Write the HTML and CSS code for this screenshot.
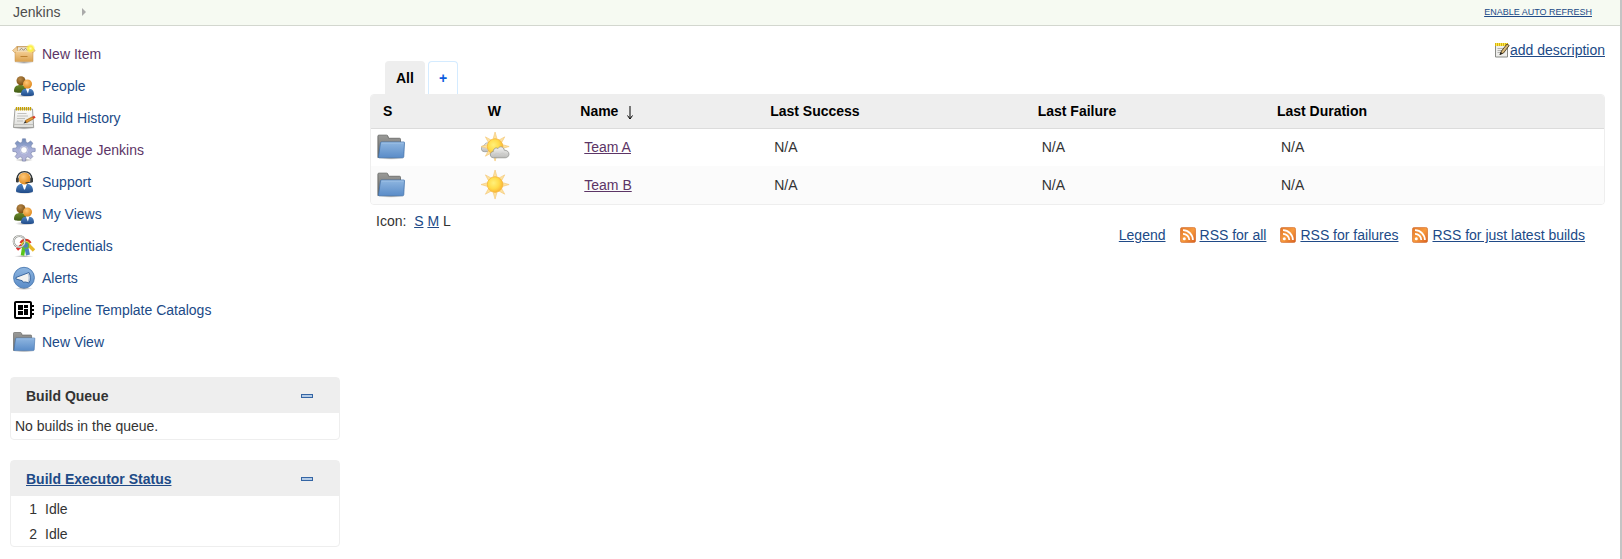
FILE: index.html
```html
<!DOCTYPE html>
<html lang="en">
<head>
    <meta charset="UTF-8">
    <meta name="viewport" content="width=device-width, initial-scale=1.0">
    <title>Dashboard [Jenkins]</title>
    <link rel="stylesheet" href="styles.css">
</head>
<body>
    <!-- Shared icons -->
    <svg class="sprite" aria-hidden="true">
        <defs>
            <linearGradient id="gBlue" x1="0" y1="0" x2="0" y2="1"><stop offset="0" stop-color="#8fb6e0"/><stop offset="1" stop-color="#5a8cc8"/></linearGradient>
            <linearGradient id="gGrey" x1="0" y1="0" x2="0" y2="1"><stop offset="0" stop-color="#9a9a98"/><stop offset="1" stop-color="#6a6b69"/></linearGradient>
            <linearGradient id="gCoat" x1="0" y1="0" x2="0" y2="1"><stop offset="0" stop-color="#4f86c6"/><stop offset="1" stop-color="#204a87"/></linearGradient>
            <linearGradient id="gGreen" x1="0" y1="0" x2="0" y2="1"><stop offset="0" stop-color="#6c8a2c"/><stop offset="1" stop-color="#3f5a14"/></linearGradient>
            <linearGradient id="gBox" x1="0" y1="0" x2="0" y2="1"><stop offset="0" stop-color="#f5cf96"/><stop offset="1" stop-color="#dba350"/></linearGradient>
            <linearGradient id="gPaper" x1="0" y1="0" x2="0" y2="1"><stop offset="0" stop-color="#ffffff"/><stop offset="1" stop-color="#dcdcd8"/></linearGradient>
            <linearGradient id="gGear" x1="0" y1="0" x2="0" y2="1"><stop offset="0" stop-color="#6c8ab8"/><stop offset="0.5" stop-color="#a9b0d8"/><stop offset="1" stop-color="#b5b5d6"/></linearGradient>
            <linearGradient id="gCloud" x1="0" y1="0" x2="0" y2="1"><stop offset="0" stop-color="#f4f4f3"/><stop offset="1" stop-color="#bcbcba"/></linearGradient>
            <linearGradient id="gRss" x1="0" y1="0" x2="1" y2="1"><stop offset="0" stop-color="#e0762a"/><stop offset="0.5" stop-color="#f79a3e"/><stop offset="1" stop-color="#d95f1e"/></linearGradient>
            <radialGradient id="gFace" cx="0.4" cy="0.35" r="0.65"><stop offset="0" stop-color="#ffc878"/><stop offset="1" stop-color="#e08a1e"/></radialGradient>
            <radialGradient id="gDark" cx="0.4" cy="0.35" r="0.65"><stop offset="0" stop-color="#b98a4a"/><stop offset="1" stop-color="#7c4f12"/></radialGradient>
            <radialGradient id="gGlow"><stop offset="0" stop-color="#fffbb0"/><stop offset="0.5" stop-color="#fcf03c"/><stop offset="1" stop-color="#fce94f" stop-opacity="0"/></radialGradient>
            <radialGradient id="gSun" cx="0.4" cy="0.4" r="0.6"><stop offset="0" stop-color="#fff07a"/><stop offset="0.6" stop-color="#ffdc4a"/><stop offset="1" stop-color="#fbb836"/></radialGradient>
            <radialGradient id="gShade"><stop offset="0" stop-color="#000" stop-opacity="0.35"/><stop offset="1" stop-color="#000" stop-opacity="0"/></radialGradient>
        </defs>

        <symbol id="icon-new-item" viewBox="0 0 24 24">
            <ellipse cx="12" cy="20.5" rx="10" ry="1.5" fill="url(#gShade)"/>
            <path d="M5 4.500h14l2 5H3z" fill="#c99a55" stroke="#b98236" stroke-width=".5"/>
            <path d="M6 5.200h12l1 3.800H5z" fill="#eee6d8"/>
            <path d="M7.500 8l2-1.500 2 1.500 2-1.500 2 1.500" fill="none" stroke="#8a7a60" stroke-width=".9"/>
            <path d="M3 9h18v10.500H3z" fill="url(#gBox)" stroke="#c08c44" stroke-width=".5"/>
            <path d="M5 4.500L.5 8.500l2 2L5.500 9zM19 4.500l4.200 4-2 2-2.700-1.500z" fill="#f3d09a" stroke="#c08c44" stroke-width=".5"/>
            <path d="M3.500 9.400h17" stroke="#fbe6c0" stroke-width=".8"/>
            <path d="M8.500 14.500h7" stroke="#bd8232" stroke-width="1"/>
            <circle cx="18.500" cy="6.500" r="4.800" fill="url(#gGlow)"/>
        </symbol>

        <symbol id="icon-people" viewBox="0 0 24 24">
            <ellipse cx="13" cy="21.500" rx="10" ry="2" fill="url(#gShade)"/>
            <path d="M2 17c0-4 2-6 6.500-6s6 2 6 6c0 1-2 1.800-6 1.800S2 18.500 2 17z" fill="url(#gGreen)"/>
            <circle cx="9" cy="6.700" r="4.500" fill="url(#gDark)"/>
            <path d="M9 20.500c0-4 2-6 6.500-6s6.500 2 6.500 6c0 1-2 1.600-6.500 1.600S9 21.500 9 20.500z" fill="url(#gCoat)"/>
            <path d="M13.800 14.500h3.600l-1.500 5z" fill="#fff"/>
            <circle cx="15.500" cy="10" r="4.500" fill="url(#gFace)"/>
        </symbol>

        <symbol id="icon-history" viewBox="0 0 24 24">
            <ellipse cx="12" cy="22.300" rx="11" ry="1.400" fill="url(#gShade)"/>
            <path d="M3 3h17.500l1.200 18.500H1.500z" fill="url(#gPaper)" stroke="#8a8a86" stroke-width=".8"/>
            <path d="M1.700 18.500h19.800" stroke="#b8b8b4" stroke-width=".8"/>
            <path d="M5.500 7.500h9M5 10h11M5 12.500h8M5 15h6" stroke="#b4b4b0" stroke-width=".8"/>
            <path d="M4.500 1v3.500M6.500 1v3.500M8.500 1v3.500M10.500 1v3.500M12.500 1v3.500M14.500 1v3.500M16.500 1v3.500M18.500 1v3.500" stroke="#c4a000" stroke-width="1.300"/>
            <path d="M11.500 17.500l2-3 1.200 2.200z" fill="#333"/>
            <path d="M13.300 14.600l7-3.800 1.300 2-7 4z" fill="#e49a3a" stroke="#8f5902" stroke-width=".6"/>
            <path d="M20.300 10.800l2-1 1.300 1.900-2 1.100z" fill="#dc3a2a"/>
        </symbol>

        <symbol id="icon-gear" viewBox="0 0 24 24">
            <ellipse cx="12" cy="22" rx="9" ry="1.800" fill="url(#gShade)"/>
            <path fill-rule="evenodd" fill="url(#gGear)" stroke="#7480a8" stroke-width=".6" d="M10.500.8h3l.5 3.400 1.900.8 2.700-2 2.300 2.200-2 2.800.8 1.900 3.500.5v3l-3.500.6-.8 1.900 2 2.700-2.200 2.200-2.800-2-1.900.8-.5 3.500h-3l-.5-3.500-1.900-.8-2.800 2-2.200-2.200 2-2.700-.8-1.900-3.500-.6v-3l3.500-.5.8-1.900-2-2.800 2.300-2.200 2.700 2 1.900-.8zM12 8.600a3.400 3.400 0 100 6.800 3.400 3.400 0 000-6.800z"/>
            <circle cx="12" cy="12" r="4" fill="none" stroke="#c4c9e6" stroke-width=".8"/>
        </symbol>

        <symbol id="icon-support" viewBox="0 0 24 24">
            <ellipse cx="12.500" cy="22.500" rx="9.500" ry="1.500" fill="url(#gShade)"/>
            <path d="M4 21c0-5 2.500-7.500 8.500-7.500S21 16 21 21c0 1.400-3 2-8.500 2S4 22.400 4 21z" fill="url(#gCoat)"/>
            <path d="M10 13.800h5l-2 5.700h-1z" fill="#fff"/>
            <circle cx="12.500" cy="8.500" r="6" fill="url(#gFace)"/>
            <path d="M5.200 9.500C4.500-1 20.500-1 19.800 9.500" fill="none" stroke="#2e3436" stroke-width="1.300"/>
            <rect x="4" y="7.500" width="2.800" height="5" rx="1.300" fill="#3a3d3c"/>
            <rect x="18.200" y="7.500" width="2.800" height="5" rx="1.300" fill="#3a3d3c"/>
            <path d="M19.500 12l-6 1" stroke="#2e3436" stroke-width="1.200"/>
        </symbol>

        <symbol id="icon-credentials" viewBox="0 0 24 24">
            <ellipse cx="12" cy="22.300" rx="10" ry="1.300" fill="url(#gShade)"/>
            <path d="M10 11l-5 4.500" stroke="#e03030" stroke-width="3.200"/>
            <path d="M17 11.500l5 5" stroke="#e8b828" stroke-width="3.400"/>
            <path d="M12 12l-1.500 9.500" stroke="#58c41c" stroke-width="3.600"/>
            <path d="M14 12l2 9" stroke="#4c82be" stroke-width="4"/>
            <path d="M8.500 9a5.500 5.500 0 0110 0" fill="none" stroke="#d83a28" stroke-width="2.200"/>
            <path d="M9.500 11a4.300 4.300 0 018.300 0" fill="none" stroke="#eec22e" stroke-width="1.800"/>
            <circle cx="13.700" cy="11.500" r="3" fill="#4c82be" stroke="#61b83c" stroke-width="1.200"/>
            <circle cx="7.300" cy="7.500" r="5.600" fill="none" stroke="#888a85" stroke-width="2"/>
            <circle cx="7.300" cy="7.500" r="5.600" fill="none" stroke="#f6f6f4" stroke-width="1"/>
        </symbol>

        <symbol id="icon-alerts" viewBox="0 0 24 24">
            <ellipse cx="12" cy="22.500" rx="9" ry="1.500" fill="url(#gShade)"/>
            <circle cx="12" cy="11.700" r="10.400" fill="url(#gBlue)" stroke="#4a78b0" stroke-width=".9"/>
            <path d="M4 11.500l13-5c1.800 3.200 1.800 7.500 0 10.500l-3.300-1-2.700.2-.8-1.500-6.200-1.700z" fill="#f2f2f0" stroke="#2f5c96" stroke-width=".9"/>
            <path d="M16 7.500c1.400 3 1.400 6 0 8.700" fill="none" stroke="#7a9cc6" stroke-width=".6"/>
        </symbol>

        <symbol id="icon-pipeline" viewBox="0 0 24 24">
            <path d="M22 9V7h-2V5c0-1.100-.9-2-2-2H4c-1.100 0-2 .9-2 2v14c0 1.100.9 2 2 2h14c1.100 0 2-.9 2-2v-2h2v-2h-2v-2h2v-2h-2V9h2zm-4 10H4V5h14v14zM6 13h5v4H6zm6-6h4v3h-4zM6 7h5v5H6zm6 4h4v6h-4z"/>
        </symbol>

        <symbol id="icon-folder" viewBox="0 0 24 24">
            <ellipse cx="12" cy="21" rx="11" ry="1.200" fill="url(#gShade)"/>
            <path d="M1.500 20.500V3.300q0-.8.800-.8h6.200q.7 0 1 .7l.6 1.800h8.700q.8 0 .8.800v8z" fill="url(#gGrey)" stroke="#5c5d5b" stroke-width=".6"/>
            <path d="M4.200 8h18.200q.5 0 .4.600l-.6 11.200q-.1.800-.9.800H2.600q-.7 0-.6-.7L3.600 8.600q.1-.6.600-.6z" fill="url(#gBlue)" stroke="#3f6fa8" stroke-width=".6"/>
            <path d="M4.500 8.800h17.600" stroke="#a8c8ea" stroke-width=".6"/>
        </symbol>

        <symbol id="icon-sun" viewBox="0 0 32 32">
            <path d="M15 0l2 7h-4zM15 31l2-7h-4zM0 15.500l7-2v4zM30 15.500l-7-2v4zM4.700 5.200l6.400 3.500-2.900 2.900zM25.300 5.200l-6.400 3.500 2.900 2.900zM4.700 25.800l6.400-3.500-2.900-2.900zM25.300 25.800l-6.400-3.500 2.900-2.900z" fill="#fde2a0" stroke="#f5c877" stroke-width=".7"/>
            <circle cx="15" cy="15.500" r="8.300" fill="url(#gSun)" stroke="#f6b73c" stroke-width=".8"/>
        </symbol>

        <symbol id="icon-cloud" viewBox="0 0 32 32">
            <path d="M4 21c-3 0-4-2-3.500-4S2.500 14.500 3.500 14.500c.5-3 4.500-4 6-1.500 2.500 0 3 3 2.500 5s-1.500 3-3 3z" fill="url(#gCloud)" stroke="#8d8f8b" stroke-width=".7"/>
            <use href="#icon-sun" width="32" height="32"/>
            <path d="M13.500 27.500c-3 0-4-2.200-3.300-4.500.5-1.400 1.800-2.200 2.800-2 0-3.300 3.200-5 5-3.300 2-3.200 6.500-2 6.800 1.700 3 0 5.200 1.700 5 4.400-.2 2.500-2 3.700-4 3.700z" fill="url(#gCloud)" stroke="#8d8f8b" stroke-width=".8"/>
            <path d="M14 24.500c2-2.500 5-2 6-.3 1.500-2.200 4.500-2.200 6 .3" fill="none" stroke="#c8c8c6" stroke-width=".8"/>
        </symbol>

        <symbol id="icon-rss" viewBox="0 0 16 16">
            <rect x=".4" y=".4" width="15.200" height="15.200" rx="2" fill="url(#gRss)" stroke="#cf6320" stroke-width=".6"/>
            <circle cx="4.300" cy="11.800" r="1.500" fill="#fff"/>
            <path d="M3 6.800a6.300 6.300 0 016.300 6.300M3 3.200a9.900 9.900 0 019.900 9.900" fill="none" stroke="#fff" stroke-width="1.800"/>
        </symbol>

        <symbol id="icon-notepad" viewBox="0 0 16 16">
            <path d="M1.500 2.500h12v12.500h-12z" fill="#eeeeec" stroke="#888a85"/>
            <path d="M3.500 6.500h6M3.500 8.500h5M3.500 10.500h3" stroke="#b4b4b0"/>
            <path d="M1 1h13v3H1z" fill="#d9b310"/>
            <path d="M2.500 1v3M4.500 1v3M6.500 1v3M8.500 1v3M10.500 1v3M12.500 1v3" stroke="#fce94f"/>
            <path d="M6 12.500l1.500-3.500 5.500-7 2.200 1.500-5.700 7.500z" fill="#d8b878" stroke="#4a3a1c" stroke-width=".9"/>
            <path d="M5.500 13l1.200-3 1.800 1.500z" fill="#222"/>
        </symbol>
    </svg>

    <div class="page">
        <header class="breadcrumb-bar">
            <nav class="breadcrumbs">
                <a href="#">Jenkins</a>
                <svg class="arrow" viewBox="0 0 4 8"><path d="M0 0l4 4-4 4z"/></svg>
            </nav>
            <a href="#" class="auto-refresh">ENABLE AUTO REFRESH</a>
        </header>

        <div class="content">
            <aside class="side-panel">
                <nav class="tasks">
                    <a href="#" class="visited"><svg class="icon"><use href="#icon-new-item"/></svg>New Item</a>
                    <a href="#"><svg class="icon"><use href="#icon-people"/></svg>People</a>
                    <a href="#"><svg class="icon"><use href="#icon-history"/></svg>Build History</a>
                    <a href="#" class="visited"><svg class="icon"><use href="#icon-gear"/></svg>Manage Jenkins</a>
                    <a href="#"><svg class="icon"><use href="#icon-support"/></svg>Support</a>
                    <a href="#"><svg class="icon"><use href="#icon-people"/></svg>My Views</a>
                    <a href="#"><svg class="icon"><use href="#icon-credentials"/></svg>Credentials</a>
                    <a href="#"><svg class="icon"><use href="#icon-alerts"/></svg>Alerts</a>
                    <a href="#"><svg class="icon"><use href="#icon-pipeline"/></svg>Pipeline Template Catalogs</a>
                    <a href="#"><svg class="icon"><use href="#icon-folder"/></svg>New View</a>
                </nav>

                <section class="pane">
                    <div class="pane-header">
                        <span>Build Queue</span>
                        <button type="button" class="collapse" aria-label="Collapse build queue"></button>
                    </div>
                    <p class="pane-text">No builds in the queue.</p>
                </section>

                <section class="pane">
                    <div class="pane-header">
                        <a href="#">Build Executor Status</a>
                        <button type="button" class="collapse" aria-label="Collapse executor status"></button>
                    </div>
                    <table class="executors">
                        <tr><td>1</td><td>Idle</td></tr>
                        <tr><td>2</td><td>Idle</td></tr>
                    </table>
                </section>
            </aside>

            <main class="main-panel">
                <div class="description">
                    <svg class="icon-small"><use href="#icon-notepad"/></svg><a href="#">add description</a>
                </div>

                <nav class="tabs">
                    <a href="#" class="tab active">All</a>
                    <a href="#" class="tab add">+</a>
                </nav>

                <div class="project-view">
                    <table class="projects">
                        <colgroup>
                            <col class="col-status">
                            <col class="col-weather">
                            <col class="col-name">
                            <col class="col-success">
                            <col class="col-failure">
                            <col>
                        </colgroup>
                        <thead>
                            <tr>
                                <th>S</th>
                                <th>W</th>
                                <th>Name <svg class="sort" viewBox="0 0 8 14"><path d="M4 0v12.500M1.500 9.500L4 13l2.500-3.500"/></svg></th>
                                <th>Last Success</th>
                                <th>Last Failure</th>
                                <th>Last Duration</th>
                            </tr>
                        </thead>
                        <tbody>
                            <tr>
                                <td class="icon-cell"><svg class="icon-large"><use href="#icon-folder"/></svg></td>
                                <td class="icon-cell"><svg class="icon-large"><use href="#icon-cloud"/></svg></td>
                                <td><a href="#" class="visited">Team A</a></td>
                                <td>N/A</td>
                                <td>N/A</td>
                                <td>N/A</td>
                            </tr>
                            <tr>
                                <td class="icon-cell"><svg class="icon-large"><use href="#icon-folder"/></svg></td>
                                <td class="icon-cell"><svg class="icon-large"><use href="#icon-sun"/></svg></td>
                                <td><a href="#" class="visited">Team B</a></td>
                                <td>N/A</td>
                                <td>N/A</td>
                                <td>N/A</td>
                            </tr>
                        </tbody>
                    </table>
                </div>

                <div class="table-footer">
                    <div class="icon-size">Icon: &nbsp;<a href="#">S</a> <a href="#">M</a> L</div>
                    <div class="feeds">
                        <a href="#">Legend</a>
                        <span class="feed"><svg class="icon-small"><use href="#icon-rss"/></svg><a href="#">RSS for all</a></span>
                        <span class="feed"><svg class="icon-small"><use href="#icon-rss"/></svg><a href="#">RSS for failures</a></span>
                        <span class="feed"><svg class="icon-small"><use href="#icon-rss"/></svg><a href="#">RSS for just latest builds</a></span>
                    </div>
                </div>
            </main>
        </div>
    </div>
</body>
</html>
```

FILE: styles.css
```css
* {
    margin: 0;
    padding: 0;
    box-sizing: border-box;
}

body {
    font-family: Helvetica, "Liberation Sans", Arial, sans-serif;
    font-size: 14px;
    line-height: 18px;
    color: #333;
    background-color: #fff;
}

a {
    color: #204a87;
}

a.visited {
    color: #5c3566;
}

svg {
    display: block;
    flex-shrink: 0;
}

.sprite {
    position: absolute;
    width: 0;
    height: 0;
}

.icon {
    width: 24px;
    height: 24px;
}

.icon-small {
    width: 16px;
    height: 16px;
}

.icon-large {
    width: 30px;
    height: 30px;
}

.page {
    min-height: 100vh;
    border-right: 2px solid #c4c4c4;
}

/* Breadcrumb bar */
.breadcrumb-bar {
    display: flex;
    justify-content: space-between;
    align-items: center;
    height: 26px;
    padding: 0 28px 1px 13px;
    background-color: #f6faf2;
    border-bottom: 1px solid #d3d7cf;
}

.breadcrumbs {
    display: flex;
    align-items: center;
    gap: 22px;
}

.breadcrumbs a {
    color: #4d4d4d;
    text-decoration: none;
}

.arrow {
    width: 4px;
    height: 8px;
    fill: #aaa;
}

.auto-refresh {
    font-size: 9px;
}

.content {
    display: flex;
    gap: 30px;
    padding: 12px 15px 12px 10px;
}

/* Side panel */
.side-panel {
    width: 330px;
    flex-shrink: 0;
}

.tasks {
    margin-bottom: 19px;
}

.tasks a {
    display: flex;
    align-items: center;
    gap: 6px;
    height: 32px;
    padding-left: 2px;
    text-decoration: none;
}

.pane {
    margin-bottom: 20px;
    border: 1px solid #eee;
    border-radius: 4px;
}

.pane-header {
    display: flex;
    justify-content: space-between;
    align-items: center;
    height: 35px;
    padding: 0 26px 0 15px;
    background-color: #eee;
    font-weight: bold;
}

.collapse {
    width: 12px;
    height: 4px;
    background-color: #b4cbe6;
    border: 1px solid #3465a4;
    cursor: pointer;
}

.pane-text {
    padding: 4px;
}

.executors {
    border-collapse: collapse;
}

.executors td {
    height: 25px;
    text-align: right;
}

.executors td:first-child {
    width: 26px;
}

.executors td:last-child {
    padding-left: 8px;
}

/* Main panel */
.main-panel {
    flex: 1;
    min-width: 0;
}

.description {
    display: flex;
    justify-content: flex-end;
    align-items: center;
    height: 23px;
}

.tabs {
    display: flex;
    align-items: flex-end;
    gap: 3px;
    padding-left: 15px;
}

.tab {
    height: 33px;
    padding: 0 10px;
    line-height: 32px;
    font-weight: bold;
    text-decoration: none;
    border: 1px solid #d4ebff;
    border-bottom: none;
    border-radius: 4px 4px 0 0;
}

.tab.active {
    color: #000;
    background-color: #eee;
    border-color: #eee;
}

.tab.add {
    color: #0b5cde;
}

.project-view {
    border: 1px solid #eee;
    border-radius: 4px;
    overflow: hidden;
}

.projects {
    width: 100%;
    table-layout: fixed;
    border-collapse: collapse;
}

.col-status {
    width: 8.5%;
}

.col-weather {
    width: 7.5%;
}

.col-name {
    width: 15.4%;
}

.col-success {
    width: 21.7%;
}

.col-failure {
    width: 19.4%;
}

.projects th {
    height: 33px;
    padding-left: 12px;
    color: #000;
    text-align: left;
    background-color: #eee;
    border-bottom: 1px solid #dcdcdc;
}

.projects td {
    height: 38px;
    padding-left: 16px;
}

.projects .icon-cell {
    padding-left: 5px;
}

.projects tbody tr:nth-child(even) {
    background-color: #fbfbfb;
}

.sort {
    display: inline-block;
    width: 8px;
    height: 14px;
    margin-left: 4px;
    vertical-align: middle;
    fill: none;
    stroke: #000;
}

.table-footer {
    display: flex;
    justify-content: space-between;
    padding: 7px 20px 0 6px;
}

.feeds {
    display: flex;
    gap: 14px;
    padding-top: 14px;
}

.feed {
    display: flex;
    align-items: center;
    gap: 4px;
}
```
